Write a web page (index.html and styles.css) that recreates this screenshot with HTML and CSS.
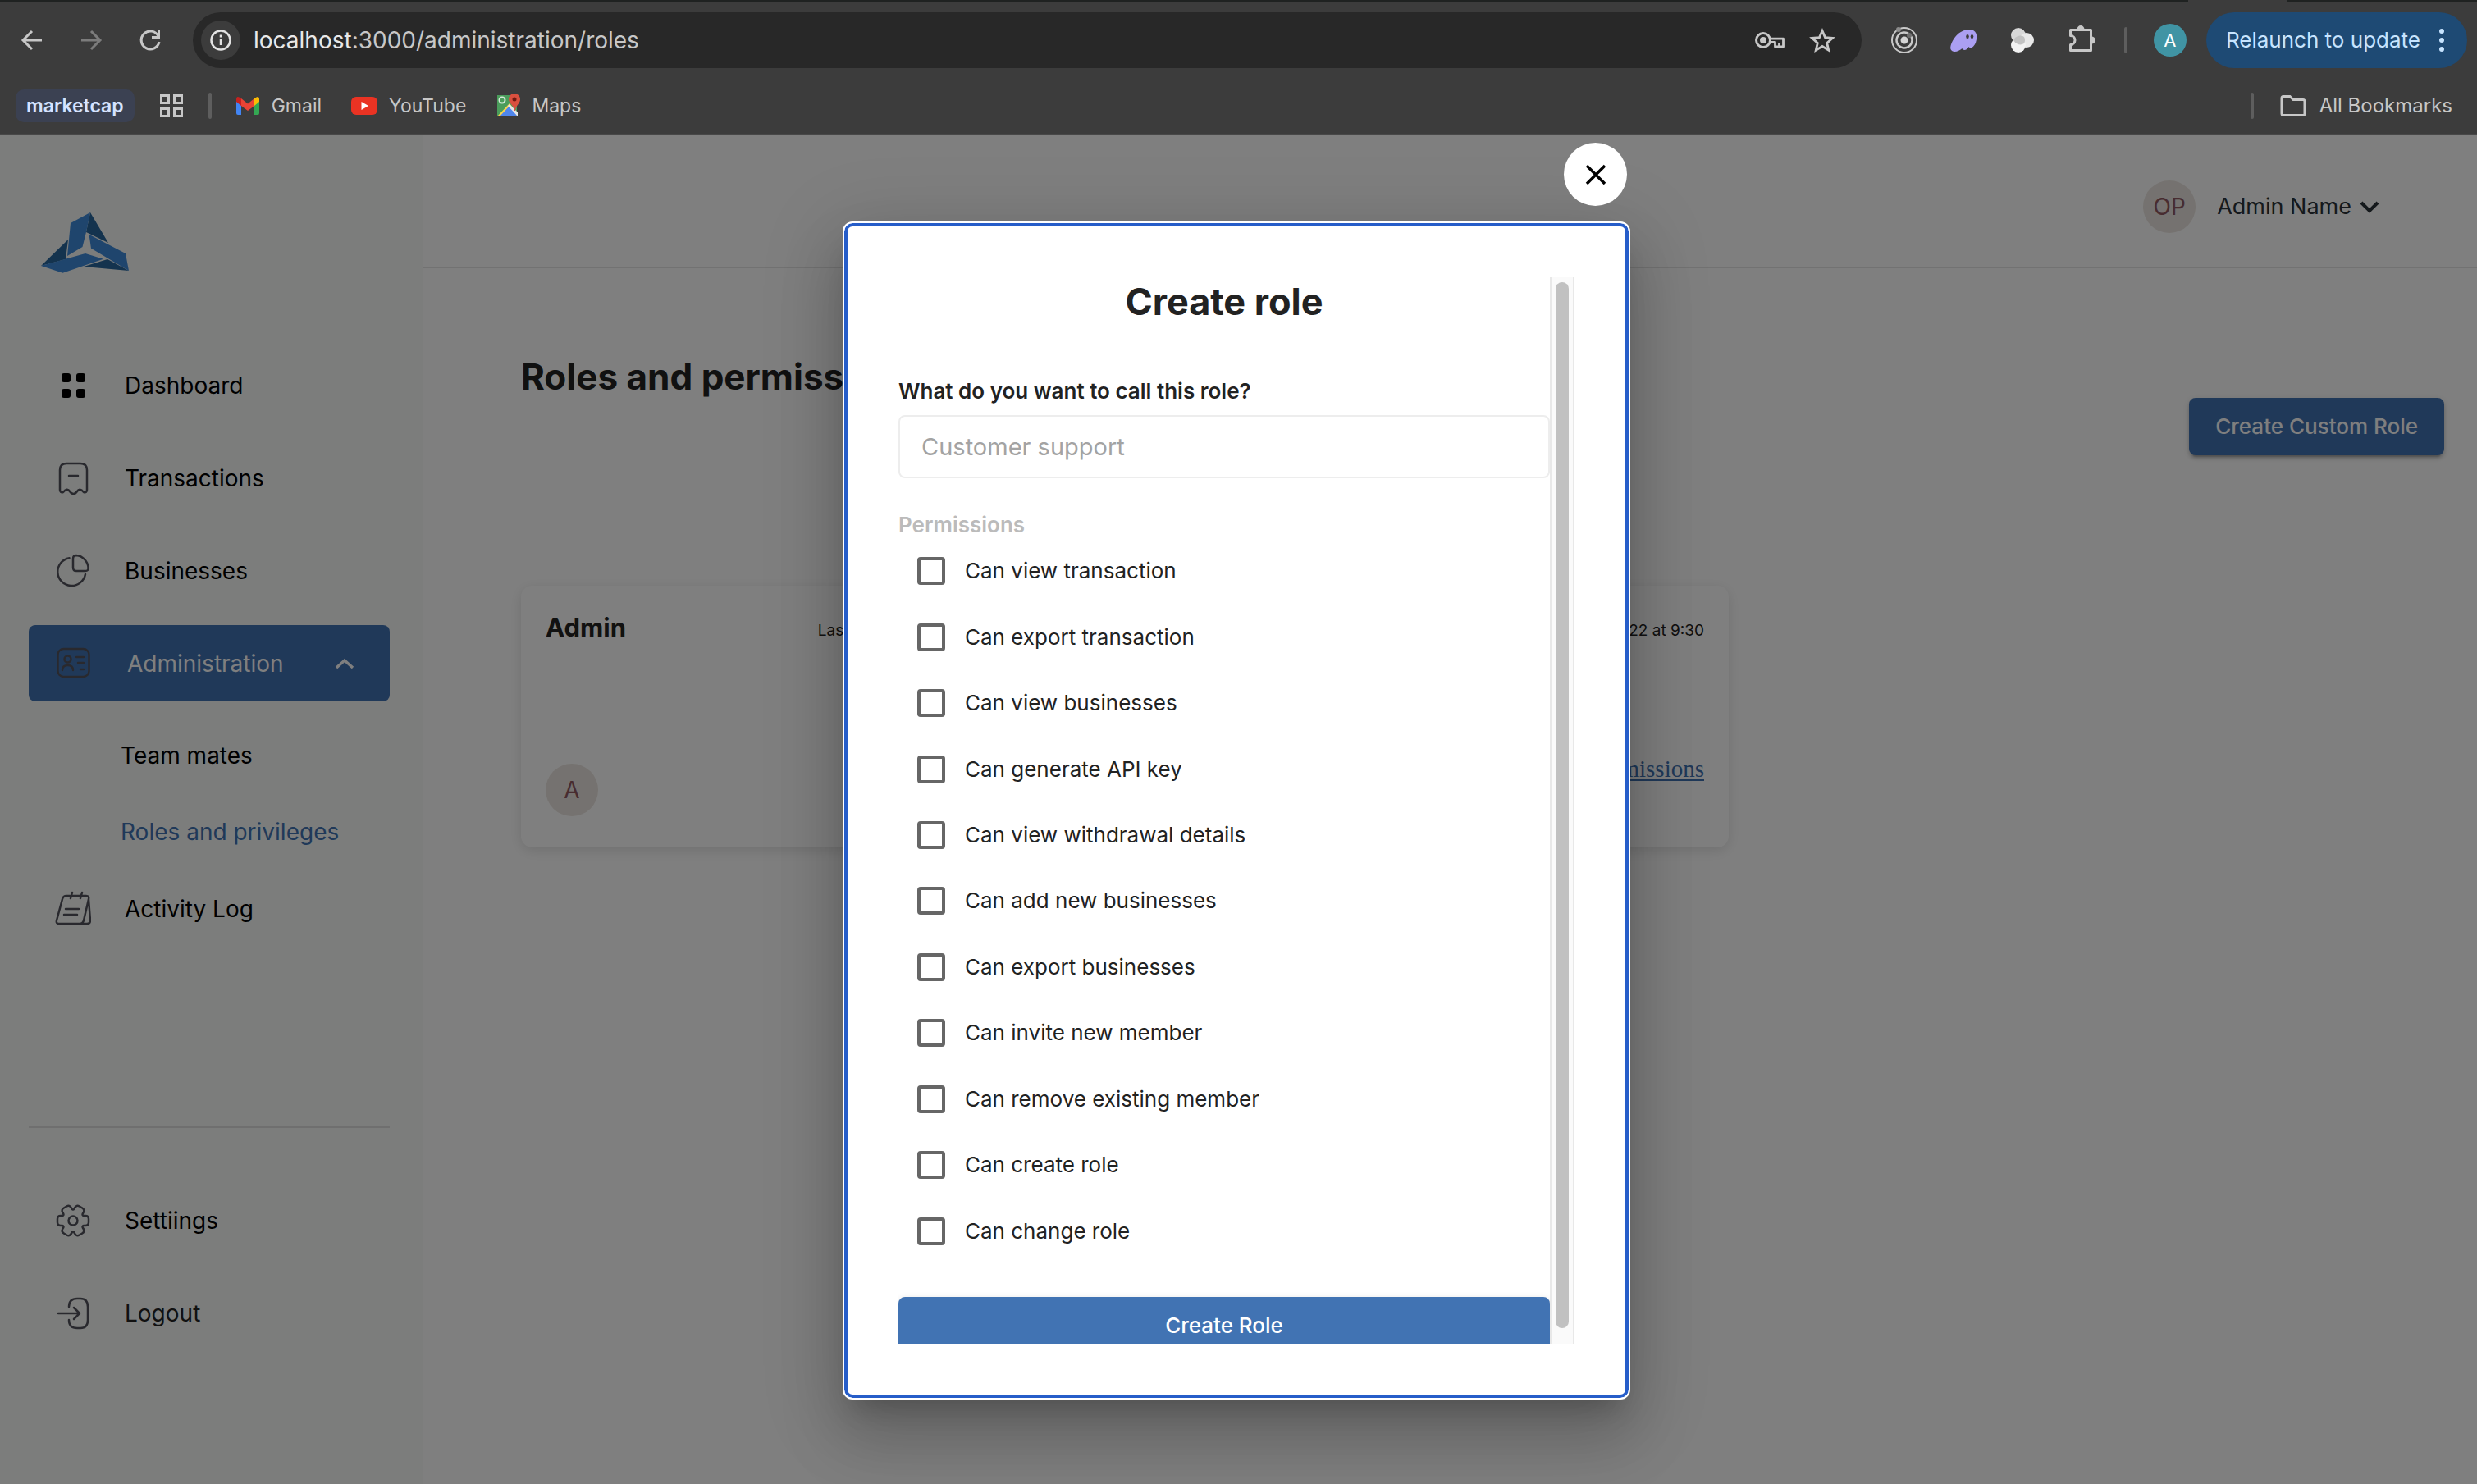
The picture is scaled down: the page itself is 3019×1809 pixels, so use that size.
FILE: index.html
```html
<!DOCTYPE html>
<html lang="en">
<head>
<meta charset="utf-8">
<title>Roles and permissions</title>
<link rel="stylesheet" href="styles.css">
</head>
<body>
<header class="browser">
  <div class="tab-strip"><span class="tab-gap"></span></div>
  <div class="toolbar">
    <button class="tool" aria-label="Back"><svg class="tool-icon" viewBox="0 0 40 40"><path d="M32 20H10M20 9L9 20l11 11" fill="none" stroke="#c7c7c7" stroke-width="3"/></svg></button>
    <button class="tool" aria-label="Forward"><svg class="tool-icon" viewBox="0 0 40 40"><path d="M8 20h22M20 9l11 11-11 11" fill="none" stroke="#7c7c7c" stroke-width="3"/></svg></button>
    <button class="tool" aria-label="Reload"><svg class="tool-icon" viewBox="0 0 40 40"><path d="M30 15A11 11 0 1 0 31 22" fill="none" stroke="#c7c7c7" stroke-width="3"/><path d="M32 8v10H22v-3h7V8z" fill="#c7c7c7"/></svg></button>
    <div class="address">
      <button class="site-info" aria-label="Site information"><svg class="info-icon" viewBox="0 0 26 26"><circle cx="13" cy="13" r="11.5" fill="none" stroke="#e3e3e3" stroke-width="2.5"/><path d="M13 11.500v7.500M13 6.500v3" stroke="#e3e3e3" stroke-width="2.500"/></svg></button>
      <div class="url"><span class="host">localhost</span>:3000/administration/roles</div>
      <button class="tool" aria-label="Passwords"><svg class="tool-icon" viewBox="0 0 40 40"><circle cx="12" cy="20" r="8.500" fill="none" stroke="#c7c7c7" stroke-width="3"/><circle cx="12" cy="20" r="4" fill="#c7c7c7"/><path d="M20 18.200H36.500V28H26.500V22.500H20M31.500 23v5" fill="none" stroke="#c7c7c7" stroke-width="2.800" stroke-linejoin="round"/></svg></button>
      <button class="tool" aria-label="Bookmark this page"><svg class="tool-icon" viewBox="0 0 40 40"><path d="M20 8.500l3.500 8.100 9 .8-6.800 6 2 8.800L20 27.500 12.300 32.200l2-8.800-6.800-6 9-.8z" fill="none" stroke="#c7c7c7" stroke-width="2.800"/></svg></button>
    </div>
    <button class="tool" aria-label="Extension"><svg class="tool-icon" viewBox="0 0 40 40" fill="none" stroke="#c9c9c9"><circle cx="20" cy="20" r="15" stroke-width="2"/><circle cx="20" cy="20" r="9.500" stroke-width="2.500"/><circle cx="20" cy="20" r="4.500" fill="#d5d5d5" stroke="none"/><circle cx="13" cy="7" r="3" fill="#8c8c8c" stroke="none"/><circle cx="26" cy="14" r="3" fill="#6e6e6e" stroke="none"/></svg></button>
    <button class="tool" aria-label="Wallet extension"><svg class="tool-icon" viewBox="0 0 40 40"><path d="M4.500 31C3 25 12 7 27 7c9 0 11 7 8 16-2 5-6 8-8.500 5-2 4-6.500 5.500-8 2-4 4-12 6-14 1z" fill="#ab9ff2"/><ellipse cx="25" cy="15.500" rx="1.800" ry="2.500" fill="#3c3c3c"/><ellipse cx="30.500" cy="15.500" rx="1.800" ry="2.500" fill="#3c3c3c"/></svg></button>
    <button class="tool" aria-label="Extension"><svg class="tool-icon" viewBox="0 0 40 40"><circle cx="15" cy="14" r="9" fill="#d8d8d8"/><circle cx="25" cy="20" r="9" fill="#e9e9e9"/><circle cx="15" cy="26" r="9" fill="#f2f2f2"/><path d="M9 20a9 9 0 0 1 13-4 9 9 0 0 1 0 8 9 9 0 0 1-13-4z" fill="#c2c2c2"/></svg></button>
    <button class="tool" aria-label="Extensions"><svg class="tool-icon" viewBox="0 0 40 40"><path d="M6.500 7.500H31.500V32.500H6.500V25.500A5.500 5.500 0 0 0 6.500 14.500Z" fill="none" stroke="#c7c7c7" stroke-width="3" stroke-linejoin="round"/><path d="M14.500 7a4.500 5 0 0 1 9 0zM32 15.500a5 4.500 0 0 1 0 9z" fill="#c7c7c7"/></svg></button>
    <span class="bar-divider"></span>
    <div class="profile">
      <button class="profile-avatar">A</button>
      <button class="relaunch">Relaunch to update<svg class="dots" viewBox="0 0 8 30" fill="#c7e4ff"><circle cx="4" cy="4" r="3"/><circle cx="4" cy="15" r="3"/><circle cx="4" cy="26" r="3"/></svg></button>
    </div>
  </div>
  <nav class="bookmarks" aria-label="Bookmarks">
    <a class="bookmark-group" href="#">marketcap</a>
    <button class="apps" aria-label="Apps"><svg class="bm-icon" viewBox="0 0 30 30" fill="none" stroke="#c7c7c7" stroke-width="3"><path d="M2.500 2.500h9v9h-9zM18.500 2.500h9v9h-9zM2.500 18.500h9v9h-9zM18.500 18.500h9v9h-9z"/></svg></button>
    <span class="bar-divider"></span>
    <a class="bookmark" href="#"><svg class="bm-icon" viewBox="0 0 30 30"><path d="M1 8v16a2 2 0 0 0 2 2h4V12z" fill="#4285f4"/><path d="M29 8v16a2 2 0 0 1-2 2h-4V12z" fill="#34a853"/><path d="M23 6l2.500-1.500C28 3 29 5 29 7v3l-6 5z" fill="#fbbc04"/><path d="M7 6L4.500 4.500C2 3 1 5 1 7v3l6 5z" fill="#c5221f"/><path d="M7 6l8 6.500L23 6v9l-8 6-8-6z" fill="#ea4335"/></svg>Gmail</a>
    <a class="bookmark" href="#"><svg class="bm-icon bm-wide" viewBox="0 0 32 30"><rect y="4" width="32" height="22" rx="6" fill="#ea3323"/><path d="M12.500 10v10l8.500-5z" fill="#fff"/></svg>YouTube</a>
    <a class="bookmark" href="#"><svg class="bm-icon" viewBox="0 0 30 30"><path d="M2 2h24v26H2z" fill="#4a9d5b"/><path d="M2 28L17 12l3 4-11 12z" fill="#fbd44c"/><path d="M5 28l12-13 10 13z" fill="#4f86ec"/><path d="M17 13l10 10v5l-12-13z" fill="#e6e6e6"/><circle cx="8" cy="8" r="3.500" fill="none" stroke="#d5ead9" stroke-width="2"/><path d="M23 0c4 0 7 3 7 7 0 5-5 7-6 14h-1c-1-7-7-9-7-14 0-4 3-7 7-7z" fill="#d9503f"/><circle cx="23" cy="7" r="2.500" fill="#6e1a12"/></svg>Maps</a>
    <span class="bar-divider bar-divider-end"></span>
    <a class="bookmark all-bookmarks" href="#"><svg class="bm-icon bm-wide" viewBox="0 0 32 30"><path d="M2 5.500q0-2 2-2h8l4 4h12q2 0 2 2v15q0 2-2 2H4q-2 0-2-2z" fill="none" stroke="#c7c7c7" stroke-width="3"/></svg>All Bookmarks</a>
  </nav>
</header>

<div class="app">
  <aside class="sidebar">
    <a class="logo" href="#" aria-label="Home"><svg class="logo-mark" viewBox="0 0 108 76"><g fill="#28669c"><path d="M60 1l22 37-27-13zM33 34L0 66l30-8zM81 58l26 14-55-5z"/></g><g fill="#3f8bdb"><path d="M60 1L36 14l-4 40 18.500-11L55 25zM58.500 27.700L103 51l4 21-46-27.300zM54 51l22 6.700-49.600 17L0 66z"/></g></svg></a>
    <nav class="menu" aria-label="Main">
      <a class="item" href="#"><svg class="item-icon" viewBox="0 0 44 44"><rect x="8" y="7" width="11" height="11" rx="3"/><rect x="26" y="7" width="11" height="11" rx="3"/><rect x="8" y="26" width="11" height="11" rx="3"/><rect x="26" y="26" width="11" height="11" rx="3"/></svg>Dashboard</a>
      <a class="item" href="#"><svg class="item-icon line" viewBox="0 0 44 44"><path d="M6 12Q6 4 14 4H31Q39 4 39 12V36Q39 40 35 39Q30 33 27 38Q25 41 22.500 41Q20 41 18 38Q15 33 10 39Q6 40 6 36ZM17 19h11"/></svg>Transactions</a>
      <a class="item" href="#"><svg class="item-icon line" viewBox="0 0 44 44"><path d="M17.500 6.200A17 17 0 1 0 37 26M22 7Q22 3 26 3A16 16 0 0 1 40.500 18Q41 22 37 22H26Q22 22 22 18Z"/></svg>Businesses</a>
      <button class="item item-active"><svg class="item-icon line" viewBox="0 0 44 44"><rect x="3.500" y="4" width="38" height="34" rx="7"/><circle cx="15.500" cy="16.500" r="4"/><path d="M9 30q0-6 6.500-6t6.500 6M26 14h9M28 21h7M31 29h4"/></svg><span class="item-label">Administration</span><svg class="chevron" viewBox="0 0 24 16"><path d="M2 13L12 4l10 9" fill="none" stroke="#fff" stroke-width="3.500"/></svg></button>
      <a class="subitem" href="#">Team mates</a>
      <a class="subitem subitem-current" href="#">Roles and privileges</a>
      <a class="item" href="#"><svg class="item-icon line" viewBox="0 0 44 44"><path d="M14 6H38Q42 6 41 10L35 36Q34 40 30 40H5Q1 40 2 36L9 10Q10 6 14 6ZM41 10L43 36Q43 40 39 40H30M21 2l-2 7M33 2l-2 7M13 22h16M11 29h16"/></svg>Activity Log</a>
    </nav>
    <nav class="menu menu-secondary" aria-label="Account">
      <a class="item" href="#"><svg class="item-icon line" viewBox="-22 -22 44 44"><path d="M13-6L15-6Q19-6 19-2L19 2Q19 6 15 6L13 6Q11 6.350 11.700 8.300L12.700 10Q14.700 13.500 11.200 15.500L7.800 17.500Q4.300 19.500 2.300 16L1.300 14.300Q0 12.700-1.300 14.300L-2.300 16Q-4.300 19.500-7.800 17.500L-11.200 15.500Q-14.700 13.500-12.700 10L-11.700 8.300Q-11 6.350-13 6L-15 6Q-19 6-19 2L-19-2Q-19-6-15-6L-13-6Q-11-6.350-11.700-8.300L-12.700-10Q-14.700-13.500-11.200-15.500L-7.800-17.500Q-4.300-19.500-2.300-16L-1.300-14.300Q0-12.700 1.300-14.300L2.300-16Q4.300-19.500 7.800-17.500L11.200-15.500Q14.700-13.500 12.700-10L11.700-8.300Q11-6.350 13-6Z"/><circle r="5.500"/></svg>Settiings</a>
      <a class="item item-logout" href="#"><svg class="item-icon line" viewBox="0 0 44 44"><path d="M17 14Q17 4 27 4H31Q40 4 40 14V30Q40 40 31 40H27Q17 40 17 30M4 22H30M23 15l7 7-7 7"/></svg>Logout</a>
    </nav>
  </aside>

  <main class="main">
    <header class="topbar">
      <span class="avatar">OP</span>
      <button class="account">Admin Name<svg class="chevron" viewBox="0 0 24 16"><path d="M2 3l10 10L22 3" fill="none" stroke="#2a3338" stroke-width="4"/></svg></button>
    </header>
    <section class="content">
      <div class="page-head">
        <h1 class="page-title">Roles and permissions</h1>
        <button class="primary create-custom">Create Custom Role</button>
      </div>
      <div class="cards">
        <article class="card">
          <div class="card-head"><h2 class="card-title">Admin</h2><p class="card-date">Last modified: April 23, 2022 at 9:30</p></div>
          <div class="card-foot"><span class="avatar">A</span></div>
        </article>
        <article class="card">
          <div class="card-head"><p class="card-date">Last modified: April 23, 2022 at 9:30</p></div>
          <div class="card-foot"><a class="card-link" href="#">View permissions</a></div>
        </article>
      </div>
    </section>
  </main>

  <div class="overlay">
    <div class="dialog" role="dialog" aria-modal="true" aria-labelledby="dialog-title">
      <button class="close" aria-label="Close"><svg class="close-icon" viewBox="0 0 26 26"><path d="M2 2l22 22M24 2L2 24" stroke="#000" stroke-width="3.500"/></svg></button>
      <form class="form">
        <h2 class="dialog-title" id="dialog-title">Create role</h2>
        <label class="field-label" for="role-name">What do you want to call this role?</label>
        <input class="field" id="role-name" type="text" placeholder="Customer support">
        <fieldset class="permissions">
          <legend class="legend">Permissions</legend>
          <div class="options">
            <label class="option"><input class="check" type="checkbox">Can view transaction</label>
            <label class="option"><input class="check" type="checkbox">Can export transaction</label>
            <label class="option"><input class="check" type="checkbox">Can view businesses</label>
            <label class="option"><input class="check" type="checkbox">Can generate API key</label>
            <label class="option"><input class="check" type="checkbox">Can view withdrawal details</label>
            <label class="option"><input class="check" type="checkbox">Can add new businesses</label>
            <label class="option"><input class="check" type="checkbox">Can export businesses</label>
            <label class="option"><input class="check" type="checkbox">Can invite new member</label>
            <label class="option"><input class="check" type="checkbox">Can remove existing member</label>
            <label class="option"><input class="check" type="checkbox">Can create role</label>
            <label class="option"><input class="check" type="checkbox">Can change role</label>
          </div>
        </fieldset>
        <button class="primary submit" type="button">Create Role</button>
      </form>
      <div class="scrollbar"><div class="thumb"></div></div>
    </div>
  </div>
</div>
</body>
</html>
```
FILE: styles.css
```css
* { box-sizing: border-box; }

body {
  margin: 0;
  min-height: 100vh;
  display: flex;
  flex-direction: column;
  font-family: Inter, "Liberation Sans", sans-serif;
  font-size: 28px;
  line-height: 36px;
  color: #000;
}

h1, h2, p { margin: 0; }
a { color: inherit; text-decoration: none; }
svg { display: block; flex: none; }
button { margin: 0; padding: 0; border: 0; background: none; font: inherit; color: inherit; }

/* Browser window */
.browser { background: #3c3c3c; border-bottom: 2px solid #484848; color: #c7c7c7; }
.tab-strip { height: 3px; background: #1f2221; display: flex; justify-content: flex-end; }
.tab-gap { width: 120px; margin-right: 232px; background: #3c3c3c; }
.toolbar { display: flex; align-items: center; gap: 32px; padding: 12px 12px 0 19px; }
.tool { width: 40px; height: 40px; flex: none; }
.tool-icon { width: 40px; height: 40px; }
.address { flex: 1; display: flex; align-items: center; gap: 24px; height: 68px; padding: 0 28px 0 10px; border-radius: 34px; background: #282828; }
.site-info { width: 48px; height: 48px; border-radius: 50%; background: #3c3c3c; display: grid; place-items: center; }
.info-icon { width: 26px; height: 26px; }
.url { flex: 1; margin-left: -8px; font-size: 28px; }
.host { color: #e8e8e8; }
.bar-divider { width: 4px; height: 32px; border-radius: 2px; background: #5e5e5e; }
.profile { display: flex; align-items: center; gap: 24px; }
.profile-avatar { width: 40px; height: 40px; border-radius: 50%; background: #4094a4; color: #fff; font-size: 22px; }
.relaunch { display: flex; align-items: center; gap: 22px; height: 68px; padding: 0 27px 0 24px; border-radius: 34px; background: #1e4a74; color: #c7e4ff; font-size: 26px; }
.dots { width: 8px; height: 30px; }
.bookmarks { display: flex; align-items: center; padding: 26px 30px 14px 19px; font-size: 23px; }
.bookmark-group { height: 40px; line-height: 40px; padding: 0 13px; border-radius: 10px; background: #3b4152; color: #d5e3ff; font-weight: 600; }
.apps { margin: 0 30px; }
.bm-icon { width: 30px; height: 30px; }
.bm-wide { width: 32px; }
.bookmark { display: flex; align-items: center; gap: 14px; margin-right: 36px; }
.bar-divider + .bookmark { margin-left: 29px; }
.bar-divider-end { margin-left: auto; }
.bar-divider + .all-bookmarks { margin: 0 0 0 32px; gap: 16px; font-size: 24px; }

/* Application */
.app { position: relative; flex: 1; display: flex; background: #fff; }
.sidebar { width: 515px; flex: none; padding: 93px 40px 0 35px; background: #f8fbf9; }
.logo { display: block; margin-left: 15px; }
.logo-mark { width: 108px; height: 76px; }
.menu { display: flex; flex-direction: column; margin-top: 89px; }
.menu-secondary { margin-top: 219px; padding-top: 66px; border-top: 2px solid #dedede; }
.item { display: flex; align-items: center; gap: 41px; height: 93px; padding-left: 32px; border-radius: 8px; text-align: left; }
.item + .item { margin-top: 20px; }
.item-icon { width: 44px; height: 44px; }
.line { fill: none; stroke: #53535d; stroke-width: 2.5px; stroke-linecap: round; stroke-linejoin: round; }
.item-active { background: #4173b3; color: #fff; padding-right: 43px; gap: 44px; margin-bottom: 20px; }
.item-label { flex: 1; }
.item-logout { color: #222; }
.chevron { width: 24px; height: 16px; }
.subitem { height: 93px; line-height: 93px; padding-left: 112px; }
.subitem-current { color: #4173b3; }

.main { flex: 1; min-width: 0; }
.topbar { display: flex; justify-content: flex-end; align-items: center; gap: 26px; padding: 55px 119px 41px; border-bottom: 2px solid #e4e4e4; }
.avatar { width: 64px; height: 64px; border-radius: 50%; background: #ebe5e0; color: #905860; font-size: 28px; line-height: 64px; text-align: center; }
.account { display: flex; align-items: center; gap: 10px; color: #2a3338; font-size: 27px; }
.content { padding: 105px 40px 0 120px; }
.page-head { display: flex; justify-content: space-between; align-items: flex-start; }
.page-title { font-size: 44px; line-height: 54px; font-weight: 700; color: #222; }
.primary { height: 70px; border-radius: 8px; background: #4173b3; color: #fff; font-size: 26px; font-weight: 500; box-shadow: 0 6px 2px -4px rgba(0,0,0,.2), 0 4px 4px rgba(0,0,0,.14), 0 2px 10px rgba(0,0,0,.12); }
.create-custom { margin-top: 53px; padding: 0 32px; }
.cards { display: grid; grid-template-columns: repeat(auto-fill, 720px); gap: 32px; margin-top: 159px; }
.card { padding: 31px 30px 38px; border-radius: 14px; box-shadow: 0 4px 16px rgba(0,0,0,.12); }
.card-head { display: flex; align-items: flex-end; height: 40px; }
.card-title { font-size: 31px; line-height: 40px; font-weight: 700; color: #222; }
.card-date { margin-left: auto; font-size: 19px; line-height: 32px; color: #222; }
.card-foot { display: flex; align-items: flex-start; height: 73px; margin-top: 137px; }
.card-foot .avatar { margin-top: 9px; }
.card-link { margin-left: auto; font-family: "Liberation Serif", serif; font-size: 29px; line-height: 30px; color: #4173b3; text-decoration: underline; text-underline-offset: 3px; }

/* Create role dialog */
.overlay { position: absolute; inset: 0; display: flex; align-items: center; justify-content: center; padding: 2px 5px 0 0; background: rgba(0,0,0,.5); }
.dialog { position: relative; display: flex; width: 960px; padding: 66px; border: 2px solid #fff; border-radius: 12px; background: #fff; box-shadow: inset 0 0 0 4px #265dc9, 0 22px 30px -14px rgba(0,0,0,.2), 0 48px 76px 6px rgba(0,0,0,.14), 0 18px 92px 16px rgba(0,0,0,.12); }
.close { position: absolute; top: -98px; right: 2px; width: 77px; height: 77px; border-radius: 50%; background: #fff; display: grid; place-items: center; }
.close-icon { width: 26px; height: 26px; }
.form { flex: 1; max-height: calc(100vh - 509px); overflow-y: auto; scrollbar-width: none; color: #222; }
.dialog-title { font-size: 45px; line-height: 60px; font-weight: 700; text-align: center; }
.field-label { display: block; margin-top: 63px; font-size: 26px; line-height: 32px; font-weight: 600; }
.field { display: block; width: 100%; height: 77px; margin-top: 13px; padding: 0 26px; border: 2px solid #ededed; border-radius: 8px; font: inherit; font-size: 29px; }
.field::placeholder { color: #a3a3a3; opacity: 1; }
.permissions { margin: 41px 0 0; padding: 0; border: 0; }
.legend { padding: 0; font-size: 26px; line-height: 32px; font-weight: 600; color: #bbb; }
.options { display: grid; grid-auto-rows: 1fr; height: 885px; }
.option { display: flex; align-items: center; gap: 24px; padding-left: 23px; font-size: 26px; }
.check { appearance: none; width: 34px; height: 34px; margin: 0; border: 4px solid #666; border-radius: 4px; }
.submit { width: 100%; margin: 40px 0 32px; }
.scrollbar { width: 30px; padding: 6px 5px; border: 2px solid #e8e8e8; border-width: 0 2px; background: #fafafa; }
.thumb { width: 16px; height: 99%; border-radius: 8px; background: #c1c1c1; }
```
